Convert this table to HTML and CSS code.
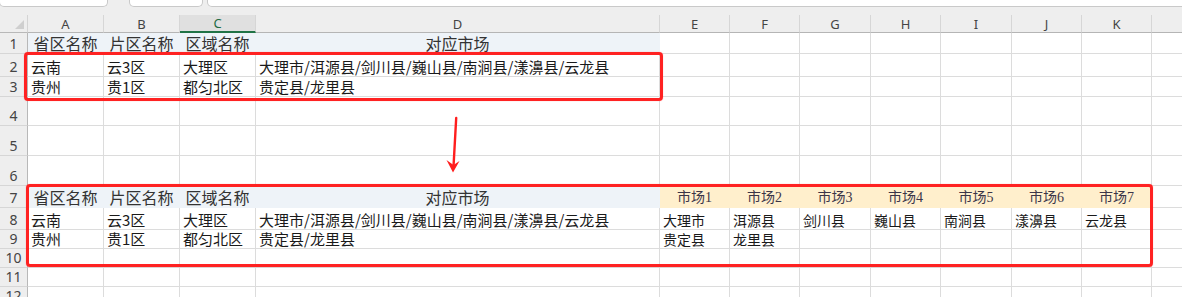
FILE: index.html
```html
<!DOCTYPE html>
<html lang="zh-CN">
<head>
<meta charset="utf-8">
<title>Sheet</title>
<link rel="stylesheet" href="styles.css">
</head>
<body>
<div class="app">
  <div class="toolbar">
    <div class="tbox tbox-1"></div>
    <div class="tbox tbox-2"></div>
    <div class="tbox tbox-3"></div>
  </div>
  <div class="sheet">
    <div class="row r-hdr">
      <div class="corner"><span class="corner-tri"></span></div>
      <div class="ch">A</div><div class="ch">B</div><div class="ch ch-sel">C</div><div class="ch">D</div>
      <div class="ch">E</div><div class="ch">F</div><div class="ch">G</div><div class="ch">H</div>
      <div class="ch">I</div><div class="ch">J</div><div class="ch">K</div><div class="ch"></div>
    </div>

    <div class="row r1">
      <div class="rh">1</div>
      <div class="c hd blue center">省区名称</div><div class="c hd blue center">片区名称</div><div class="c hd blue center">区域名称</div><div class="c hd blue center">对应市场</div>
      <div class="c"></div><div class="c"></div><div class="c"></div><div class="c"></div><div class="c"></div><div class="c"></div><div class="c"></div><div class="c"></div>
    </div>
    <div class="row r2">
      <div class="rh">2</div>
      <div class="c">云南</div><div class="c">云3区</div><div class="c">大理区</div><div class="c">大理市/洱源县/剑川县/巍山县/南涧县/漾濞县/云龙县</div>
      <div class="c"></div><div class="c"></div><div class="c"></div><div class="c"></div><div class="c"></div><div class="c"></div><div class="c"></div><div class="c"></div>
    </div>
    <div class="row r3">
      <div class="rh">3</div>
      <div class="c">贵州</div><div class="c">贵1区</div><div class="c">都匀北区</div><div class="c">贵定县/龙里县</div>
      <div class="c"></div><div class="c"></div><div class="c"></div><div class="c"></div><div class="c"></div><div class="c"></div><div class="c"></div><div class="c"></div>
    </div>
    <div class="row r4">
      <div class="rh">4</div>
      <div class="c"></div><div class="c"></div><div class="c"></div><div class="c"></div>
      <div class="c"></div><div class="c"></div><div class="c"></div><div class="c"></div><div class="c"></div><div class="c"></div><div class="c"></div><div class="c"></div>
    </div>
    <div class="row r5">
      <div class="rh">5</div>
      <div class="c"></div><div class="c"></div><div class="c"></div><div class="c"></div>
      <div class="c"></div><div class="c"></div><div class="c"></div><div class="c"></div><div class="c"></div><div class="c"></div><div class="c"></div><div class="c"></div>
    </div>
    <div class="row r6">
      <div class="rh">6</div>
      <div class="c"></div><div class="c"></div><div class="c"></div><div class="c"></div>
      <div class="c"></div><div class="c"></div><div class="c"></div><div class="c"></div><div class="c"></div><div class="c"></div><div class="c"></div><div class="c"></div>
    </div>
    <div class="row r7">
      <div class="rh">7</div>
      <div class="c hd blue center">省区名称</div><div class="c hd blue center">片区名称</div><div class="c hd blue center">区域名称</div><div class="c hd blue center">对应市场</div>
      <div class="c mk gold center">市场1</div><div class="c mk gold center">市场2</div><div class="c mk gold center">市场3</div><div class="c mk gold center">市场4</div><div class="c mk gold center">市场5</div><div class="c mk gold center">市场6</div><div class="c mk gold center">市场7</div><div class="c"></div>
    </div>
    <div class="row r8">
      <div class="rh">8</div>
      <div class="c">云南</div><div class="c">云3区</div><div class="c">大理区</div><div class="c">大理市/洱源县/剑川县/巍山县/南涧县/漾濞县/云龙县</div>
      <div class="c sm">大理市</div><div class="c sm">洱源县</div><div class="c sm">剑川县</div><div class="c sm">巍山县</div><div class="c sm">南涧县</div><div class="c sm">漾濞县</div><div class="c sm">云龙县</div><div class="c"></div>
    </div>
    <div class="row r9">
      <div class="rh">9</div>
      <div class="c">贵州</div><div class="c">贵1区</div><div class="c">都匀北区</div><div class="c">贵定县/龙里县</div>
      <div class="c sm">贵定县</div><div class="c sm">龙里县</div><div class="c"></div><div class="c"></div><div class="c"></div><div class="c"></div><div class="c"></div><div class="c"></div>
    </div>
    <div class="row r10">
      <div class="rh">10</div>
      <div class="c"></div><div class="c"></div><div class="c"></div><div class="c"></div>
      <div class="c"></div><div class="c"></div><div class="c"></div><div class="c"></div><div class="c"></div><div class="c"></div><div class="c"></div><div class="c"></div>
    </div>
    <div class="row r11">
      <div class="rh">11</div>
      <div class="c"></div><div class="c"></div><div class="c"></div><div class="c"></div>
      <div class="c"></div><div class="c"></div><div class="c"></div><div class="c"></div><div class="c"></div><div class="c"></div><div class="c"></div><div class="c"></div>
    </div>
    <div class="row r12">
      <div class="rh">12</div>
      <div class="c"></div><div class="c"></div><div class="c"></div><div class="c"></div>
      <div class="c"></div><div class="c"></div><div class="c"></div><div class="c"></div><div class="c"></div><div class="c"></div><div class="c"></div><div class="c"></div>
    </div>

    <div class="mark mark-1"></div>
    <div class="mark mark-2"></div>
    <svg class="arrow" width="20" height="62" viewBox="0 0 20 62">
      <path d="M11.2 2 L8.6 49" stroke="#ff1e1e" stroke-width="2.4" stroke-linecap="round" fill="none"/>
      <path d="M1.5 44 L8 56.5 L14.5 45 L8.5 49 Z" fill="#ff1e1e"/>
    </svg>
  </div>
</div>
</body>
</html>
```

FILE: styles.css
```css
* { box-sizing: border-box; }
html, body {
  margin: 0;
  padding: 0;
  background: #ffffff;
}
body {
  width: 1182px;
  height: 297px;
  overflow: hidden;
  font-family: "Noto Sans CJK SC", "Noto Sans", sans-serif;
}
.app {
  width: 1182px;
  height: 297px;
  overflow: hidden;
}
.toolbar {
  height: 15px;
  background: #eeeeee;
  display: flex;
  align-items: flex-start;
}
.tbox {
  height: 7px;
  background: #ffffff;
  border: 1px solid #c9c9c9;
  border-top: none;
  border-radius: 0 0 5px 5px;
}
.tbox-1 { width: 109px; margin-left: -1px; }
.tbox-2 { width: 74px; margin-left: 21px; }
.tbox-3 { flex: 1; margin-left: 4px; margin-right: -10px; }

.sheet {
  position: relative;
}
.row {
  display: grid;
  grid-template-columns: 28px 76px 76px 76px 404px 70px 70px 71px 70px 71px 70px 70px 40px;
}
.r-hdr { height: 18px; }
.r1 { height: 21px; }
.r2 { height: 23px; }
.r3 { height: 20px; }
.r4 { height: 29px; }
.r5 { height: 30px; }
.r6 { height: 30px; }
.r7 { height: 22px; }
.r8 { height: 22px; }
.r9 { height: 19px; }
.r10 { height: 19px; }
.r11 { height: 19px; }
.r12 { height: 19px; }

.corner {
  background: #eeeeee;
  border-right: 1px solid #d4d4d4;
  border-bottom: 1px solid #b8b8b8;
  position: relative;
}
.corner-tri {
  position: absolute;
  right: 3px;
  bottom: 3px;
  width: 0;
  height: 0;
  border-left: 9px solid transparent;
  border-bottom: 9px solid #cfcfcf;
}
.ch {
  background: #eeeeee;
  border-right: 1px solid #d6d6d6;
  border-bottom: 1px solid #b5b5b5;
  display: flex;
  align-items: center;
  justify-content: center;
  font-family: "Noto Sans", "Liberation Sans", sans-serif;
  font-size: 13px;
  color: #444444;
  line-height: 1;
  padding-top: 1px;
}
.ch-sel {
  background: #e0e0e0;
  color: #1f6b44;
  border-bottom: 2px solid #217346;
}
.rh {
  background: #eeeeee;
  border-right: 1px solid #b8b8b8;
  border-bottom: 1px solid #d6d6d6;
  display: flex;
  align-items: flex-end;
  justify-content: center;
  font-family: "Noto Sans", "Liberation Sans", sans-serif;
  font-size: 14px;
  line-height: 1;
  color: #444444;
  padding-bottom: 2px;
}
.c {
  border-right: 1px solid #dcdcdc;
  border-bottom: 1px solid #dcdcdc;
  display: flex;
  align-items: flex-end;
  padding: 0 0 2px 3px;
  white-space: nowrap;
  font-size: 15px;
  line-height: 1;
  color: #1a1a1a;
}
.c.center { justify-content: center; padding-left: 0; }
.hd { font-size: 16px; color: #333333; }
.blue { background: #eef3f8; border-color: #eef3f8; }
.gold { background: #ffefcc; border-color: #ffefcc; }
.mk {
  font-family: "Liberation Serif", "Noto Sans CJK SC", serif;
  font-size: 14px;
  color: #3b3548;
}
.sm { font-size: 14px; }

.mark {
  position: absolute;
  border: 3px solid #ff2222;
  border-radius: 4px;
  box-shadow: 0 0 1px rgba(255, 40, 40, 0.5);
}
.mark-1 {
  left: 24px;
  top: 37px;
  width: 639px;
  height: 48.5px;
}
.mark-2 {
  left: 26px;
  top: 168.5px;
  width: 1127px;
  height: 83px;
}
.arrow {
  position: absolute;
  left: 445px;
  top: 101px;
}
```
